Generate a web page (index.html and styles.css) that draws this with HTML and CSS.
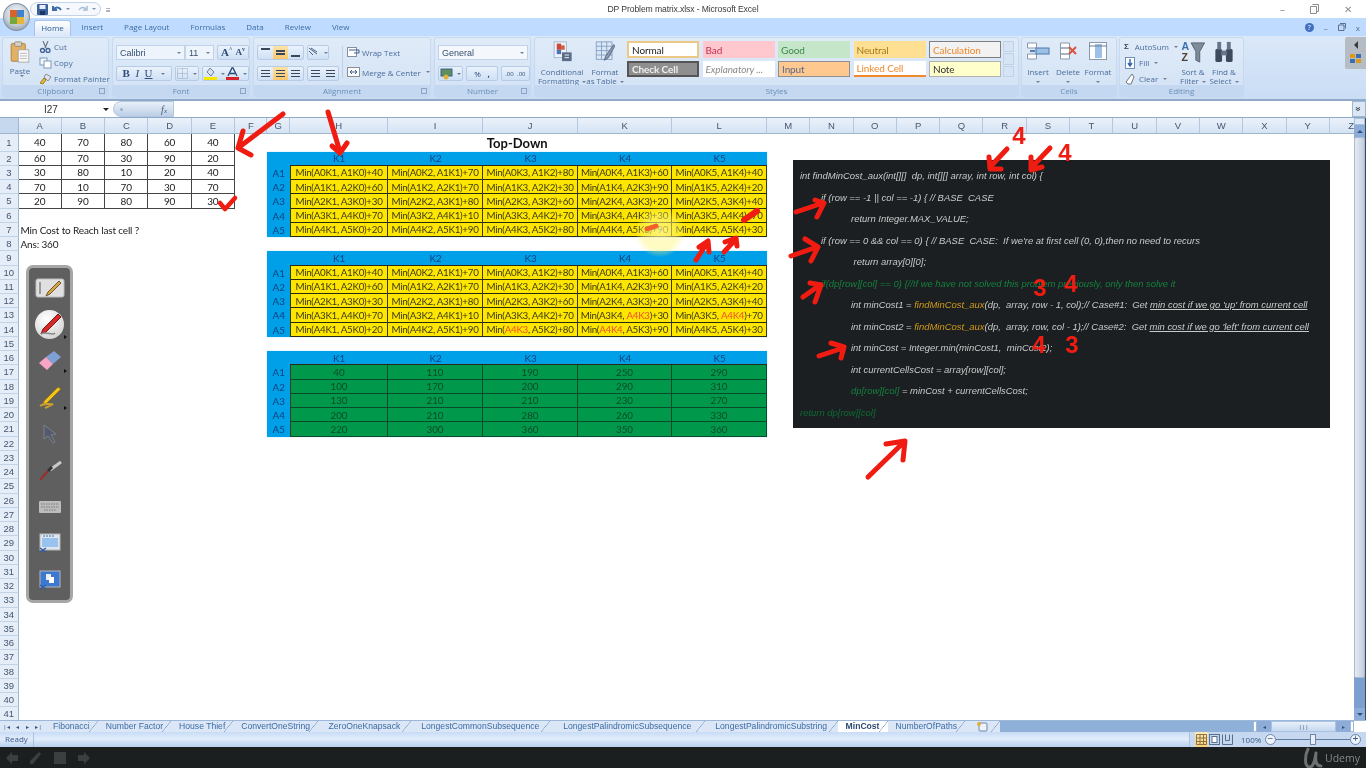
FILE: index.html
```html
<!DOCTYPE html>
<html lang="en">

<head>
  <meta charset="UTF-8">
  <title>DP Problem matrix.xlsx - Microsoft Excel</title>
  <link rel="stylesheet" href="styles.css">
</head>

<body>
  <div class="app">

    <!-- title bar -->
    <div class="titleBar">
      <div class="qat">
        <svg width="11" height="11" viewBox="0 0 11 11"><rect width="11" height="11" rx="1" fill="#3a5f9f"/><rect x="2.500" y="1" width="6" height="4" fill="#e6eef8"/><rect x="3" y="7" width="5" height="4" fill="#20365f"/></svg>
        <svg width="12" height="11" viewBox="0 0 12 11"><path d="M2 2v4h4M2.500 6C4 3 8 2.500 10 6" fill="none" stroke="#3f6cab" stroke-width="2"/></svg>
        <span class="qatCaret"></span>
        <svg width="12" height="11" viewBox="0 0 12 11"><path d="M10 2v4H6M9.500 6C8 3 4 2.500 2 6" fill="none" stroke="#a9bdd6" stroke-width="1.500"/></svg>
        <span class="qatCaret"></span>
      </div>
      <div class="qatMore">&#8801;</div>
      <div class="docTitle">DP Problem matrix.xlsx - Microsoft Excel</div>
      <div class="winBtns">
        <span>&#8211;</span>
        <svg width="9" height="10" viewBox="0 0 9 10"><path d="M2.500 .5h6v7h-2M.5 2.500h6v7h-6z" fill="none" stroke="#8d8d8d"/></svg>
        <span>&#10005;</span>
      </div>
    </div>

    <!-- office button -->
    <div class="officeBtn">
      <div class="officeLogo"><i class="oRed"></i><i class="oBlue"></i><i class="oGreen"></i><i class="oYellow"></i></div>
    </div>

    <!-- tabs -->
    <div class="tabRow">
      <div class="tab tabActive">Home</div>
      <div class="tab">Insert</div>
      <div class="tab">Page Layout</div>
      <div class="tab">Formulas</div>
      <div class="tab">Data</div>
      <div class="tab">Review</div>
      <div class="tab">View</div>
      <div class="tabRight">
        <span class="helpIcon">?</span>
        <span>&#8211;</span>
        <svg width="8" height="8" viewBox="0 0 8 8"><path d="M2 .5h5.500v5M.5 2h5.500v5.500h-5.500z" fill="none" stroke="#5a6f8c"/></svg>
        <span>x</span>
      </div>
    </div>

    <!-- ribbon -->
    <div class="ribbon">

      <div class="group groupClipboard">
        <div class="groupBody clipBody">
          <div class="bigBtn pasteBtn">
            <svg width="20" height="22" viewBox="0 0 22 25"><rect x="1" y="3" width="16" height="20" rx="1" fill="#e3b163" stroke="#a87a35"/><rect x="5" y="1" width="8" height="5" rx="1" fill="#d7d2c4" stroke="#8f8a7a"/><rect x="9" y="10" width="12" height="14" fill="#f8f8f8" stroke="#a6a6a6"/><path d="M11 14h8M11 17h8M11 20h8" stroke="#b5b5b5"/></svg>
            <span>Paste</span>
            <span class="caret"></span>
          </div>
          <div class="clipList">
            <div class="clipItem">
              <svg width="13" height="12" viewBox="0 0 13 12"><path d="M4 0l3 7M9 0L6 7" stroke="#6e7781" stroke-width="1.200"/><circle cx="3.500" cy="9.500" r="2" fill="none" stroke="#3c5f92" stroke-width="1.300"/><circle cx="9" cy="9.500" r="2" fill="none" stroke="#3c5f92" stroke-width="1.300"/></svg>
              Cut
            </div>
            <div class="clipItem">
              <svg width="13" height="12" viewBox="0 0 13 12"><rect x="1" y="1" width="7" height="7" fill="#f5f8fc" stroke="#7d97b8"/><rect x="5" y="4" width="7" height="7" fill="#fff" stroke="#7d97b8"/></svg>
              Copy
            </div>
            <div class="clipItem">
              <svg width="13" height="12" viewBox="0 0 13 12"><path d="M7 1l5 3-3 4-4-4z" fill="#dfe4ea" stroke="#8a8f96"/><path d="M5 5L1 10l3 1 3-4z" fill="#e7b649" stroke="#a47d22"/></svg>
              Format Painter
            </div>
          </div>
        </div>
        <div class="groupLabel">Clipboard<i class="launcher"></i></div>
      </div>

      <div class="group groupFont">
        <div class="groupBody stackBody">
          <div class="ctrlRow">
            <div class="combo comboFont">Calibri<span class="caret"></span></div>
            <div class="combo comboSize">11<span class="caret"></span></div>
            <div class="btnGroup growBtns"><b class="serif">A<sup>^</sup></b><b class="serif small">A<sup>v</sup></b></div>
          </div>
          <div class="ctrlRow">
            <div class="btnGroup fontStyles"><b class="serif">B</b><i class="serif">I</i><u class="serif">U</u><span class="caret"></span></div>
            <div class="btnGroup borderBtn">
              <svg width="11" height="11" viewBox="0 0 11 11"><path d="M.5.5h10v10H.5zM5.500.5v10M.5 5.500h10" fill="none" stroke="#8fa6c2" stroke-dasharray="1 1"/></svg>
              <span class="caret"></span>
            </div>
            <div class="btnGroup colorBtns">
              <svg width="13" height="13" viewBox="0 0 13 13"><path d="M6 1l4 4-3 4-4-4z" fill="#d8e3f0" stroke="#6d7f96"/><rect y="10" width="13" height="3" fill="#f5e500"/></svg>
              <span class="caret"></span>
              <svg width="13" height="13" viewBox="0 0 13 13"><path d="M2 9l4-8h1l4 8M4 6.500h5" fill="none" stroke="#27457a" stroke-width="1.300"/><rect y="10" width="13" height="3" fill="#d9232a"/></svg>
              <span class="caret"></span>
            </div>
          </div>
        </div>
        <div class="groupLabel">Font<i class="launcher"></i></div>
      </div>

      <div class="group groupAlign">
        <div class="groupBody alignBody">
          <div class="stackBody alignBtns">
            <div class="ctrlRow">
              <div class="btnGroup alignTrio">
                <span class="alignCell"><i class="lines top"></i></span>
                <span class="alignCell on"><i class="lines"></i></span>
                <span class="alignCell"><i class="lines bottom"></i></span>
              </div>
              <div class="btnGroup orientBtn"><svg width="13" height="11" viewBox="0 0 13 11"><path d="M1 1l8 6M3 1l6 4M1 4l4 4" stroke="#4a5f7e" fill="none"/></svg><span class="caret"></span></div>
            </div>
            <div class="ctrlRow">
              <div class="btnGroup alignTrio">
                <span class="alignCell"><i class="lines wide"></i></span>
                <span class="alignCell on"><i class="lines wide"></i></span>
                <span class="alignCell"><i class="lines wide"></i></span>
              </div>
              <div class="btnGroup indentBtns">
                <span class="alignCell"><i class="lines wide"></i></span>
                <span class="alignCell"><i class="lines wide"></i></span>
              </div>
            </div>
          </div>
          <div class="wrapCol">
            <div class="clipItem">
              <svg width="13" height="12" viewBox="0 0 13 12"><rect x=".5" y="1.500" width="9" height="9" fill="#fff" stroke="#8a8f96"/><path d="M2 4h10v3H7" fill="none" stroke="#3c5f92"/></svg>
              Wrap Text
            </div>
            <div class="clipItem">
              <svg width="13" height="12" viewBox="0 0 13 12"><rect x=".5" y="1.500" width="12" height="9" fill="#fff" stroke="#8a8f96"/><path d="M3 6h7M3 6l2-2M3 6l2 2M10 6L8 4M10 6L8 8" fill="none" stroke="#3c5f92"/></svg>
              Merge &amp; Center<span class="caret"></span>
            </div>
          </div>
        </div>
        <div class="groupLabel">Alignment<i class="launcher"></i></div>
      </div>

      <div class="group groupNumber">
        <div class="groupBody stackBody">
          <div class="ctrlRow">
            <div class="combo comboNumber">General<span class="caret"></span></div>
          </div>
          <div class="ctrlRow">
            <div class="btnGroup acctBtn">
              <svg width="13" height="12" viewBox="0 0 13 12"><rect x="1" y="1" width="11" height="7" fill="#5f8f5a" stroke="#3c5f92"/><circle cx="6" cy="9" r="2.500" fill="#e1b33e"/></svg>
              <span class="caret"></span>
            </div>
            <div class="btnGroup pctBtn"><span>%</span><b>,</b></div>
            <div class="btnGroup decBtn"><span>.00</span><span>.00</span></div>
          </div>
        </div>
        <div class="groupLabel">Number<i class="launcher"></i></div>
      </div>

      <div class="group groupStyles">
        <div class="groupBody stylesBody">
          <div class="bigBtn condBtn">
            <svg width="24" height="24" viewBox="0 0 24 24"><rect x="3" y="1" width="14" height="18" fill="#eef3f9" stroke="#9fb4cd"/><rect x="6" y="3" width="5" height="7" fill="#c84a3a"/><rect x="6" y="10" width="5" height="5" fill="#4a74b4"/><rect x="11" y="5" width="4" height="5" fill="#d2583f"/><rect x="12" y="13" width="11" height="10" fill="#5b6d86"/><path d="M15 16h5M15 19h5" stroke="#fff"/></svg>
            <span>Conditional</span>
            <span>Formatting<i class="caret"></i></span>
          </div>
          <div class="bigBtn tableBtn">
            <svg width="24" height="24" viewBox="0 0 24 24"><rect x="2" y="1" width="18" height="20" fill="#dbe7f5" stroke="#7f9dc2"/><path d="M2 6h18M2 11h18M2 16h18M8 1v20M14 1v20" stroke="#7f9dc2"/><path d="M22 4L13 17l-2 5 5-3L23 6z" fill="#8a9bb0" stroke="#54657c"/></svg>
            <span>Format</span>
            <span>as Table<i class="caret"></i></span>
          </div>
          <div class="gallery">
            <div class="style styleNormal">Normal</div>
            <div class="style styleBad">Bad</div>
            <div class="style styleGood">Good</div>
            <div class="style styleNeutral">Neutral</div>
            <div class="style styleCalc">Calculation</div>
            <div class="style styleCheck">Check Cell</div>
            <div class="style styleExpl">Explanatory ...</div>
            <div class="style styleInput">Input</div>
            <div class="style styleLinked">Linked Cell</div>
            <div class="style styleNote">Note</div>
          </div>
          <div class="galleryScroll"><i></i><i></i><i></i></div>
        </div>
        <div class="groupLabel">Styles</div>
      </div>

      <div class="group groupCells">
        <div class="groupBody cellsBody">
          <div class="bigBtn cellBtn">
            <svg width="24" height="20" viewBox="0 0 24 20"><path d="M1.500 2h9v5h-9zM1.500 13h9v5h-9z" fill="#fff" stroke="#8a99ab"/><rect x="10" y="7" width="13" height="6" fill="#9cc0e6" stroke="#4a78b0"/><path d="M4 10h5" stroke="#2c5a96" stroke-width="1.500"/></svg>
            <span>Insert</span><span class="caret"></span>
          </div>
          <div class="bigBtn cellBtn">
            <svg width="24" height="20" viewBox="0 0 24 20"><path d="M4.500 2h9v5h-9zM4.500 13h9v5h-9zM4.500 7h9v6h-9z" fill="#fff" stroke="#8a99ab"/><path d="M13 6l7 7M20 6l-7 7" stroke="#d9533f" stroke-width="2"/></svg>
            <span>Delete</span><span class="caret"></span>
          </div>
          <div class="bigBtn cellBtn">
            <svg width="24" height="20" viewBox="0 0 24 20"><rect x="3.500" y="1.500" width="17" height="17" fill="#fff" stroke="#8a99ab"/><rect x="9" y="3" width="7" height="14" fill="#9cc0e6"/><path d="M3 5h18" stroke="#6a7f99"/></svg>
            <span>Format</span><span class="caret"></span>
          </div>
        </div>
        <div class="groupLabel">Cells</div>
      </div>

      <div class="group groupEditing">
        <div class="groupBody editBody">
          <div class="editList">
            <div class="clipItem"><b class="sigma">&#931;</b>AutoSum<span class="caret"></span></div>
            <div class="clipItem">
              <svg width="10" height="12" viewBox="0 0 10 12"><rect x=".5" y=".5" width="9" height="11" fill="#fff" stroke="#6f8fb8"/><path d="M5 2v6M3 6l2 3 2-3" fill="none" stroke="#2c63ad" stroke-width="1.400"/></svg>
              Fill<span class="caret"></span>
            </div>
            <div class="clipItem">
              <svg width="10" height="12" viewBox="0 0 10 12"><path d="M7 1L1 9l2 2h3l3-7z" fill="#fff" stroke="#6e7781"/></svg>
              Clear<span class="caret"></span>
            </div>
          </div>
          <div class="bigBtn sortBtn">
            <svg width="26" height="25" viewBox="0 0 26 25"><text x="1" y="10" class="azText">A</text><text x="1" y="22" class="azText zText">Z</text><path d="M11 3h14l-5 9v11l-4-2v-9z" fill="#7e8b9b" stroke="#55616f"/></svg>
            <span>Sort &amp;</span>
            <span>Filter<i class="caret"></i></span>
          </div>
          <div class="bigBtn findBtn">
            <svg width="22" height="25" viewBox="0 0 22 25"><rect x="2" y="9" width="7" height="14" rx="2" fill="#3d4a5c"/><rect x="13" y="9" width="7" height="14" rx="2" fill="#3d4a5c"/><rect x="4" y="2" width="4" height="8" fill="#65748a"/><rect x="14" y="2" width="4" height="8" fill="#65748a"/><rect x="8" y="11" width="6" height="5" fill="#65748a"/></svg>
            <span>Find &amp;</span>
            <span>Select<i class="caret"></i></span>
          </div>
        </div>
        <div class="groupLabel">Editing</div>
      </div>

      <div class="sideWidget">
        <span class="sideArrow"></span>
        <div class="sideDots"><i class="dotGold"></i><i class="dotBlue"></i><i class="dotBlue"></i><i class="dotGold"></i></div>
      </div>
    </div>

    <!-- formula bar -->
    <div class="formulaBar">
      <div class="nameBox">I27<span class="caretDark"></span></div>
      <div class="fxBtn"><span class="fxDot"></span><em>f<small>x</small></em></div>
      <div class="formulaInput"></div>
      <div class="formulaMore"><span>&#187;</span></div>
    </div>

    <!-- sheet -->
    <div class="sheetWrap">
      <div class="sheet">
        <div class="corner"></div>
        <div class="colHd">A</div><div class="colHd">B</div><div class="colHd">C</div><div class="colHd">D</div><div class="colHd">E</div>
        <div class="colHd">F</div><div class="colHd">G</div><div class="colHd">H</div><div class="colHd">I</div><div class="colHd">J</div>
        <div class="colHd">K</div><div class="colHd">L</div><div class="colHd">M</div><div class="colHd">N</div><div class="colHd">O</div>
        <div class="colHd">P</div><div class="colHd">Q</div><div class="colHd">R</div><div class="colHd">S</div><div class="colHd">T</div>
        <div class="colHd">U</div><div class="colHd">V</div><div class="colHd">W</div><div class="colHd">X</div><div class="colHd">Y</div>
        <div class="colHd">Z</div>

        <div class="rowHd">1</div><div class="rowHd">2</div><div class="rowHd">3</div><div class="rowHd">4</div><div class="rowHd">5</div>
        <div class="rowHd">6</div><div class="rowHd">7</div><div class="rowHd">8</div><div class="rowHd">9</div><div class="rowHd">10</div>
        <div class="rowHd">11</div><div class="rowHd">12</div><div class="rowHd">13</div><div class="rowHd">14</div><div class="rowHd">15</div>
        <div class="rowHd">16</div><div class="rowHd">17</div><div class="rowHd">18</div><div class="rowHd">19</div><div class="rowHd">20</div>
        <div class="rowHd">21</div><div class="rowHd">22</div><div class="rowHd">23</div><div class="rowHd">24</div><div class="rowHd">25</div>
        <div class="rowHd">26</div><div class="rowHd">27</div><div class="rowHd">28</div><div class="rowHd">29</div><div class="rowHd">30</div>
        <div class="rowHd">31</div><div class="rowHd">32</div><div class="rowHd">33</div><div class="rowHd">34</div><div class="rowHd">35</div>
        <div class="rowHd">36</div><div class="rowHd">37</div><div class="rowHd">38</div><div class="rowHd">39</div><div class="rowHd">40</div>
        <div class="rowHd">41</div>

        <div class="costGrid">
          <div>40</div><div>70</div><div>80</div><div>60</div><div>40</div>
          <div>60</div><div>70</div><div>30</div><div>90</div><div>20</div>
          <div>30</div><div>80</div><div>10</div><div>20</div><div>40</div>
          <div>70</div><div>10</div><div>70</div><div>30</div><div>70</div>
          <div>20</div><div>90</div><div>80</div><div>90</div><div>30</div>
        </div>
        <div class="question">Min Cost to Reach last cell ?</div>
        <div class="answer">Ans: 360</div>

        <div class="blockTitle">Top-Down</div>

        <div class="dpTable tableOne">
          <div class="blank"></div><div class="kHd">K1</div><div class="kHd">K2</div><div class="kHd">K3</div><div class="kHd">K4</div><div class="kHd">K5</div>
          <div class="aHd">A1</div><div class="cell">Min(A0K1, A1K0)+40</div><div class="cell">Min(A0K2, A1K1)+70</div><div class="cell">Min(A0K3, A1K2)+80</div><div class="cell">Min(A0K4, A1K3)+60</div><div class="cell">Min(A0K5, A1K4)+40</div>
          <div class="aHd">A2</div><div class="cell">Min(A1K1, A2K0)+60</div><div class="cell">Min(A1K2, A2K1)+70</div><div class="cell">Min(A1K3, A2K2)+30</div><div class="cell">Min(A1K4, A2K3)+90</div><div class="cell">Min(A1K5, A2K4)+20</div>
          <div class="aHd">A3</div><div class="cell">Min(A2K1, A3K0)+30</div><div class="cell">Min(A2K2, A3K1)+80</div><div class="cell">Min(A2K3, A3K2)+60</div><div class="cell">Min(A2K4, A3K3)+20</div><div class="cell">Min(A2K5, A3K4)+40</div>
          <div class="aHd">A4</div><div class="cell">Min(A3K1, A4K0)+70</div><div class="cell">Min(A3K2, A4K1)+10</div><div class="cell">Min(A3K3, A4K2)+70</div><div class="cell">Min(A3K4, A4K3)+30</div><div class="cell">Min(A3K5, A4K4)+70</div>
          <div class="aHd">A5</div><div class="cell">Min(A4K1, A5K0)+20</div><div class="cell">Min(A4K2, A5K1)+90</div><div class="cell">Min(A4K3, A5K2)+80</div><div class="cell">Min(A4K4, A5K3)+90</div><div class="cell">Min(A4K5, A5K4)+30</div>
        </div>

        <div class="dpTable tableTwo">
          <div class="blank"></div><div class="kHd">K1</div><div class="kHd">K2</div><div class="kHd">K3</div><div class="kHd">K4</div><div class="kHd">K5</div>
          <div class="aHd">A1</div><div class="cell">Min(A0K1, A1K0)+40</div><div class="cell">Min(A0K2, A1K1)+70</div><div class="cell">Min(A0K3, A1K2)+80</div><div class="cell">Min(A0K4, A1K3)+60</div><div class="cell">Min(A0K5, A1K4)+40</div>
          <div class="aHd">A2</div><div class="cell">Min(A1K1, A2K0)+60</div><div class="cell">Min(A1K2, A2K1)+70</div><div class="cell">Min(A1K3, A2K2)+30</div><div class="cell">Min(A1K4, A2K3)+90</div><div class="cell">Min(A1K5, A2K4)+20</div>
          <div class="aHd">A3</div><div class="cell">Min(A2K1, A3K0)+30</div><div class="cell">Min(A2K2, A3K1)+80</div><div class="cell">Min(A2K3, A3K2)+60</div><div class="cell">Min(A2K4, A3K3)+20</div><div class="cell">Min(A2K5, A3K4)+40</div>
          <div class="aHd">A4</div><div class="cell">Min(A3K1, A4K0)+70</div><div class="cell">Min(A3K2, A4K1)+10</div><div class="cell">Min(A3K3, A4K2)+70</div><div class="cell">Min(A3K4, <span class="hot">A4K3</span>)+30</div><div class="cell">Min(A3K5, <span class="hot">A4K4</span>)+70</div>
          <div class="aHd">A5</div><div class="cell">Min(A4K1, A5K0)+20</div><div class="cell">Min(A4K2, A5K1)+90</div><div class="cell">Min(<span class="hot">A4K3</span>, A5K2)+80</div><div class="cell">Min(<span class="hot">A4K4</span>, A5K3)+90</div><div class="cell">Min(A4K5, A5K4)+30</div>
        </div>

        <div class="dpTable tableThree">
          <div class="blank"></div><div class="kHd">K1</div><div class="kHd">K2</div><div class="kHd">K3</div><div class="kHd">K4</div><div class="kHd">K5</div>
          <div class="aHd">A1</div><div class="cell">40</div><div class="cell">110</div><div class="cell">190</div><div class="cell">250</div><div class="cell">290</div>
          <div class="aHd">A2</div><div class="cell">100</div><div class="cell">170</div><div class="cell">200</div><div class="cell">290</div><div class="cell">310</div>
          <div class="aHd">A3</div><div class="cell">130</div><div class="cell">210</div><div class="cell">210</div><div class="cell">230</div><div class="cell">270</div>
          <div class="aHd">A4</div><div class="cell">200</div><div class="cell">210</div><div class="cell">280</div><div class="cell">260</div><div class="cell">330</div>
          <div class="aHd">A5</div><div class="cell">220</div><div class="cell">300</div><div class="cell">360</div><div class="cell">350</div><div class="cell">360</div>
        </div>
      </div>

      <div class="vScroll">
        <div class="vSplit"></div>
        <div class="vArrow"><i class="arrowUp"></i></div>
        <div class="vThumb"></div>
        <div class="vTrack"></div>
        <div class="vArrow"><i class="arrowDown"></i></div>
      </div>
    </div>

    <!-- sheet tabs -->
    <div class="sheetTabs">
      <div class="tabNav"><span>|&#9666;</span><span>&#9666;</span><span>&#9656;</span><span>&#9656;|</span></div>
      <div class="sheetTab">Fibonacci</div>
      <div class="sheetTab">Number Factor</div>
      <div class="sheetTab">House Thief</div>
      <div class="sheetTab">ConvertOneString</div>
      <div class="sheetTab tabWide">ZeroOneKnapsack</div>
      <div class="sheetTab tabWide">LongestCommonSubsequence</div>
      <div class="sheetTab tabWider">LongestPalindromicSubsequence</div>
      <div class="sheetTab tabWide">LongestPalindromicSubstring</div>
      <div class="sheetTab sheetTabOn">MinCost</div>
      <div class="sheetTab">NumberOfPaths</div>
      <div class="sheetTab newSheet">
        <svg width="13" height="11" viewBox="0 0 13 11"><rect x="3" y="2" width="8" height="8" rx="1" fill="#eef3f9" stroke="#6c86a8"/><circle cx="3" cy="3" r="2" fill="#e3ad3c"/></svg>
      </div>
      <div class="hScroll">
        <div class="hGrip"></div>
        <div class="hArrow">&#9666;</div>
        <div class="hThumb">|||</div>
        <div class="hArrow">&#9656;</div>
        <div class="hGrip"></div>
      </div>
      <div class="tabsEnd"></div>
    </div>

    <!-- status bar -->
    <div class="statusBar">
      <div class="ready">Ready</div>
      <div class="statusRight">
        <div class="viewBtns">
          <span class="viewBtn viewOn"><svg width="11" height="11" viewBox="0 0 11 11"><path d="M.5.5h10v10H.5zM.5 4h10M.5 7.500h10M4 .5v10M7.500.5v10" fill="none" stroke="#8a7540"/></svg></span>
          <span class="viewBtn"><svg width="11" height="11" viewBox="0 0 11 11"><rect x=".5" y=".5" width="10" height="10" fill="none" stroke="#566f8d"/><rect x="3" y="2.500" width="5" height="6" fill="#fff" stroke="#566f8d"/></svg></span>
          <span class="viewBtn"><svg width="11" height="11" viewBox="0 0 11 11"><path d="M.5.5v10h10V.5M3.500.5v6h4v-6" fill="none" stroke="#566f8d"/></svg></span>
        </div>
        <span class="zoomPct">100%</span>
        <span class="zoomBtn">&#8722;</span>
        <div class="zoomTrack"><i class="zoomThumb"></i></div>
        <span class="zoomBtn">+</span>
      </div>
    </div>

    <!-- recorder bar -->
    <div class="playerBar">
      <div class="playerIcons">
        <svg width="14" height="14" viewBox="0 0 14 14"><path d="M7 1L1 7l6 6v-3h6V4H7z" fill="#3c3f40"/></svg>
        <svg width="14" height="14" viewBox="0 0 14 14"><path d="M10 1l2 2-8 10-3 0 0-3z" fill="#3c3f40"/></svg>
        <svg width="14" height="14" viewBox="0 0 14 14"><rect x="1" y="1" width="12" height="12" fill="#3c3f40"/></svg>
        <svg width="14" height="14" viewBox="0 0 14 14"><path d="M7 1l6 6-6 6v-3H1V4h6z" fill="#3c3f40"/></svg>
      </div>
      <div class="udemy">
        <svg width="20" height="22" viewBox="0 0 20 22"><path d="M5 2C2 8 1 19 6 20c5 1 6-9 7-14M13 6c-1 8 0 13 5 13" fill="none" stroke="#6e7071" stroke-width="3" stroke-linecap="round"/></svg>
        <span>Udemy</span>
      </div>
    </div>

    <!-- floating picture of the code -->
    <div class="codePanel">
      <div class="codeLine">int findMinCost_aux(int[][]  dp, int[][] array, int row, int col) {</div>
      <div class="codeLine lvl1">if (row == -1 || col == -1) { // BASE  CASE</div>
      <div class="codeLine lvl2">return Integer.MAX_VALUE;</div>
      <div class="codeLine lvl1">if (row == 0 &amp;&amp; col == 0) { // BASE  CASE:  If we're at first cell (0, 0),then no need to recurs</div>
      <div class="codeLine lvl2"> return array[0][0];</div>
      <div class="codeLine lvl1 green">if(dp[row][col] == 0) {//If we have not solved this problem previously, only then solve it</div>
      <div class="codeLine lvl2">int minCost1 = <span class="fnName">findMinCost_aux</span>(dp,  array, row - 1, col);// Case#1:  Get <u>min cost if we go 'up' from current cell</u></div>
      <div class="codeLine lvl2">int minCost2 = <span class="fnName">findMinCost_aux</span>(dp,  array, row, col - 1);// Case#2:  Get <u>min cost if we go 'left' from current cell</u></div>
      <div class="codeLine lvl2">int minCost = Integer.min(minCost1,  minCost2);</div>
      <div class="codeLine lvl2">int currentCellsCost = array[row][col];</div>
      <div class="codeLine lvl2"><span class="green">dp[row][col]</span> = minCost + currentCellsCost;</div>
      <div class="codeLine green dim">return dp[row][col]</div>
    </div>

    <!-- presentation toolbar -->
    <div class="penBar">
      <svg width="30" height="22" viewBox="0 0 30 22"><rect x="1" y="2" width="28" height="18" rx="2" fill="#e0e0e0" stroke="#bdbdbd"/><path d="M5 5v12" stroke="#999" stroke-width="2"/><path d="M24 4L13 15l-2 4 4-2L26 6z" fill="#d9a441" stroke="#6b5a30"/></svg>
      <div class="penActive">
        <svg width="28" height="28" viewBox="0 0 28 28"><path d="M22 3L7 18l-2 5 5-2L25 6z" fill="#d72b2b" stroke="#7a1515"/><path d="M5 23c4-3 12 2 14-1" fill="none" stroke="#8a8a8a" stroke-width="1.500"/></svg>
        <i class="penFlag"></i>
      </div>
      <div class="penSlot">
        <svg width="24" height="24" viewBox="0 0 24 24"><path d="M8 8l8-6 7 6-8 7z" fill="#7ea0d6"/><path d="M1 14l7-6 7 7-6 6z" fill="#f6a6c4"/></svg>
        <i class="penFlag"></i>
      </div>
      <div class="penSlot">
        <svg width="24" height="24" viewBox="0 0 24 24"><path d="M20 1l3 2L9 17l-4 2 1-4z" fill="#f2c21d" stroke="#8e7316"/><path d="M2 20c5-4 9-1 13-2-3 2-6 3-8 4" fill="none" stroke="#c9a02b" stroke-width="2"/></svg>
        <i class="penFlag"></i>
      </div>
      <svg width="14" height="20" viewBox="0 0 14 20"><path d="M1 1l0 14 4-3 5 7 2-1-4-7 5-1z" fill="#535a6b" stroke="#7a7f8a"/></svg>
      <svg width="24" height="22" viewBox="0 0 24 22"><path d="M23 2L12 10" stroke="#c8c8c8" stroke-width="3"/><path d="M14 7l-4 4" stroke="#333" stroke-width="3"/><path d="M10 11L2 20" stroke="#9a2d2d" stroke-width="2"/></svg>
      <svg width="22" height="12" viewBox="0 0 22 12"><rect width="22" height="12" rx="1" fill="#bdbdbd"/><path d="M2 3h18M2 6h18M5 9h12" stroke="#777" stroke-dasharray="1.500 1"/></svg>
      <svg width="22" height="21" viewBox="0 0 22 21"><rect x="1" y="1" width="20" height="16" fill="#dfe6ee" stroke="#b5b5b5"/><rect x="3" y="5" width="16" height="9" fill="#9ac2ee"/><path d="M4 3h12" stroke="#3e6fb3" stroke-dasharray="2 1"/><path d="M1 15l6 4M7 15l-6 4" stroke="#2f5da8" stroke-width="1.500"/></svg>
      <svg width="22" height="21" viewBox="0 0 22 21"><rect x="1" y="1" width="20" height="16" fill="#3d78d0" stroke="#b5b5b5"/><rect x="7" y="4" width="5" height="6" fill="#e9eef5"/><rect x="10" y="7" width="5" height="6" fill="#fff"/><path d="M1 15l6 4M7 15l-6 4" stroke="#2f5da8" stroke-width="1.500"/></svg>
    </div>

    <!-- cursor highlight and red pen marks drawn over the video -->
    <div class="cursorGlow"></div>
    <svg class="inkLayer" width="1366" height="768" viewBox="0 0 1366 768">
      <g class="ink">
        <path d="M283 114L238 148M243 131L238 148L251 155"/>
        <path d="M328 112L340 152M332 146L340 153L347 143"/>
        <path class="thin" d="M220 203L225 209L235 198"/>
        <path class="inkOrange" d="M647 229L656 226"/>
        <path class="thick" d="M744 220L757 211"/>
        <path d="M696 260L707 243M699 247L708 241L709 252"/>
        <path d="M724 252L735 240M725 242L736 238L737 246"/>
        <path d="M1007 149L990 167M989 157L990 169L1001 169"/>
        <path d="M1050 148L1031 168M1031 157L1031 170L1042 167"/>
        <path d="M796 212L823 203M815 200L824 203L817 217"/>
        <path d="M791 256L817 247M805 239L818 247L811 261"/>
        <path d="M803 297L820 285M810 283L821 285L815 302"/>
        <path d="M819 356L843 348M831 343L844 347L841 358"/>
        <path d="M868 477L904 442M886 444L905 441L903 460"/>
      </g>
    </svg>
    <span class="inkDigit d1">4</span>
    <span class="inkDigit d2">4</span>
    <span class="inkDigit d3">3</span>
    <span class="inkDigit d4">4</span>
    <span class="inkDigit d5">4</span>
    <span class="inkDigit d6">3</span>

  </div>
</body>

</html>
```

FILE: styles.css
```css
* {
  box-sizing: border-box;
}

html,
body {
  margin: 0;
  height: 100%;
  overflow: hidden;
}

.app {
  position: relative;
  width: 1366px;
  height: 768px;
  overflow: hidden;
  background: #fff;
  display: flex;
  flex-direction: column;
  font-family: "Open Sans", "Noto Sans", sans-serif;
  font-size: 8px;
  color: #4a6d9c;
  filter: blur(0.35px);
}

.caret {
  display: inline-block;
  width: 0;
  height: 0;
  margin-left: 3px;
  border-left: 2px solid transparent;
  border-right: 2px solid transparent;
  border-top: 2px solid #6b7f99;
  vertical-align: middle;
}

/* title bar */
.titleBar {
  height: 18px;
  flex: none;
  display: flex;
  align-items: center;
  position: relative;
  background: #fff;
}

.qat {
  margin-left: 30px;
  width: 71px;
  height: 14px;
  border: 1px solid #c4d3e6;
  border-radius: 7px;
  background: #f5f8fd;
  display: flex;
  align-items: center;
  gap: 3px;
  padding-left: 6px;
}

.qatCaret {
  width: 0;
  height: 0;
  margin-right: 4px;
  border-left: 2px solid transparent;
  border-right: 2px solid transparent;
  border-top: 2px solid #7d8fa8;
}

.qatMore {
  margin-left: 5px;
  color: #667;
  font-size: 8px;
}

.docTitle {
  position: absolute;
  left: 0;
  right: 0;
  text-align: center;
  font-family: "Liberation Sans", sans-serif;
  font-size: 8.600px;
  letter-spacing: -0.1px;
  color: #3a3a3a;
}

.winBtns {
  margin-left: auto;
  display: flex;
  align-items: center;
  gap: 25px;
  padding-right: 14px;
  color: #8d8d8d;
  font-size: 10px;
}

/* office button */
.officeBtn {
  position: absolute;
  left: 3px;
  top: 3px;
  width: 27px;
  height: 28px;
  border-radius: 50%;
  background: radial-gradient(circle at 50% 35%, #f6f8fb 0, #c4cdd6 55%, #7d8a93 100%);
  border: 1px solid #7f92a8;
  display: flex;
  align-items: center;
  justify-content: center;
  z-index: 2;
}

.officeLogo {
  display: grid;
  grid-template-columns: 7px 7px;
  grid-template-rows: 7px 7px;
}

.oRed { background: #d9622b; }
.oBlue { background: #3f83cc; }
.oGreen { background: #74a83e; }
.oYellow { background: #e6b63a; }

/* ribbon tabs */
.tabRow {
  height: 18px;
  flex: none;
  display: flex;
  align-items: flex-end;
  padding-left: 34px;
  background: #bfdbff;
  color: #3f6da3;
}

.tab {
  height: 16px;
  padding: 0 10.500px;
  line-height: 14px;
  white-space: nowrap;
}

.tabActive {
  width: 37px;
  padding: 0;
  text-align: center;
  background: linear-gradient(#fdfeff, #dbe8f8);
  border: 1px solid #a9c4e4;
  border-bottom: 0;
  border-radius: 3px 3px 0 0;
  color: #2f5a94;
}

.tabRight {
  margin-left: auto;
  height: 18px;
  display: flex;
  align-items: center;
  gap: 10px;
  padding-right: 6px;
  color: #5a6f8c;
}

.helpIcon {
  width: 9px;
  height: 9px;
  border-radius: 50%;
  background: #3f6fc0;
  color: #fff;
  font-size: 7px;
  line-height: 9px;
  text-align: center;
}

/* ribbon */
.ribbon {
  height: 65px;
  flex: none;
  display: flex;
  gap: 3px;
  padding: 1px 0 1px 2px;
  background: linear-gradient(#dbe8f9, #c9ddf5);
  border-bottom: 2px solid #8fabc9;
}

.group {
  display: flex;
  flex-direction: column;
  background: linear-gradient(#e0ebf8, #d2e2f5);
  border: 1px solid #c7d9ee;
  border-radius: 3px;
  flex: none;
}

.groupClipboard { width: 107px; }
.groupFont { width: 138px; }
.groupAlign { width: 178px; }
.groupNumber { width: 97px; }
.groupStyles { width: 485px; }
.groupCells { width: 96px; margin-left: -1px; }
.groupEditing { width: 125px; margin-left: -1px; }

.groupBody {
  flex: 1;
  min-height: 0;
}

.groupLabel {
  height: 12px;
  flex: none;
  position: relative;
  text-align: center;
  line-height: 11px;
  color: #6a8cb5;
  background: #c4d9f1;
  border-radius: 0 0 3px 3px;
}

.launcher {
  position: absolute;
  right: 3px;
  top: 3px;
  width: 6px;
  height: 6px;
  border: 1px solid #8ca5c4;
}

.bigBtn {
  display: flex;
  flex-direction: column;
  align-items: center;
  line-height: 9px;
  flex: none;
  white-space: nowrap;
}

.bigBtn svg {
  margin-bottom: 1px;
}

.clipBody {
  display: flex;
  padding: 3px 0 0 4px;
}

.pasteBtn {
  width: 26px;
}

.pasteBtn svg {
  margin-bottom: 3px;
}

.clipList {
  display: flex;
  flex-direction: column;
  gap: 3px;
  margin: -1px 0 0 6px;
}

.clipItem {
  display: flex;
  align-items: center;
  gap: 2px;
  height: 13px;
  white-space: nowrap;
}

.stackBody {
  display: flex;
  flex-direction: column;
  gap: 6px;
  padding: 7px 0 0 3px;
}

.ctrlRow {
  display: flex;
  gap: 3px;
  height: 15px;
}

.combo {
  height: 15px;
  display: flex;
  align-items: center;
  padding: 0 3px;
  background: #eef4fc;
  border: 1px solid #c0d3ea;
  color: #35506f;
  font-family: "Liberation Sans", sans-serif;
  font-size: 9px;
}

.combo .caret {
  margin-left: auto;
}

.comboFont { width: 69px; margin-right: -3px; }
.comboSize { width: 29px; }
.comboNumber { width: 90px; background: #f4f8fd; }

.btnGroup {
  height: 15px;
  display: flex;
  align-items: center;
  justify-content: space-evenly;
  background: linear-gradient(#eaf2fc, #cfe0f5);
  border: 1px solid #b5cbe6;
  border-radius: 2px;
  color: #2e4d78;
}

.serif {
  font-family: "Liberation Serif", serif;
  font-size: 11px;
  line-height: 11px;
}

.serif.small {
  font-size: 9px;
}

.serif sup {
  font-size: 6px;
  line-height: 0;
}

.growBtns { width: 32px; }
.fontStyles { width: 56px; }
.borderBtn { width: 25px; }
.colorBtns { width: 47px; }

.alignBody {
  display: flex;
}

.alignBtns {
  width: 86px;
}

.alignTrio { width: 47px; padding: 0; justify-content: flex-start; }
.indentBtns { width: 32px; padding: 0; justify-content: flex-start; }
.orientBtn { width: 22px; }

.alignCell {
  flex: 1;
  height: 13px;
  display: flex;
  align-items: center;
  justify-content: center;
}

.alignCell.on {
  background: linear-gradient(#fde3a8, #fbc66b);
}

.lines {
  display: block;
  width: 9px;
  height: 5px;
  border-top: 2px solid #39475b;
  border-bottom: 2px solid #39475b;
}

.lines.top { height: 3px; border-bottom: 0; margin-bottom: 6px; }
.lines.bottom { height: 3px; border-top: 0; margin-top: 6px; }

.lines.wide {
  height: 7px;
  border-width: 1px 0;
  background: linear-gradient(#39475b, #39475b) center / 100% 1px no-repeat;
}

.wrapCol {
  display: flex;
  flex-direction: column;
  gap: 8px;
  margin: 8px 0 0 2px;
  padding-left: 4px;
  border-left: 1px solid #bcd0e8;
  height: 32px;
}

.acctBtn { width: 26px; }
.pctBtn { width: 32px; }
.decBtn { width: 30px; font-size: 6px; }

.stylesBody {
  display: flex;
  padding: 3px 0 0 2px;
}

.condBtn { width: 50px; }
.tableBtn { width: 36px; }

.condBtn svg,
.tableBtn svg {
  margin-bottom: 5px;
}

.caret + .caret {
  margin-left: 0;
}

.gallery {
  margin-left: 4px;
  display: grid;
  grid-template-columns: repeat(5, 72px);
  grid-template-rows: 17px 16px;
  column-gap: 3.500px;
  row-gap: 3px;
  font-family: Lato, sans-serif;
  font-size: 10px;
  letter-spacing: -0.1px;
}

.style {
  display: flex;
  align-items: center;
  padding-left: 3px;
  white-space: nowrap;
  overflow: hidden;
}

.styleNormal { background: #fff; border: 2px solid #edc987; color: #222; }
.styleBad { background: #ffc7ce; color: #c4304a; }
.styleGood { background: #c6e6c9; color: #3d8a4a; }
.styleNeutral { background: #ffe093; color: #a37a16; }
.styleCalc { background: #f2f2f2; color: #ef8a2c; border: 1px solid #7f7f7f; }
.styleCheck { background: #8f8f8f; color: #eee; border: 2px solid #555; font-weight: bold; }
.styleExpl { background: #fff; color: #8a8a8a; font-style: italic; }
.styleInput { background: #ffc88f; color: #556a8f; border: 1px solid #8f8f8f; }
.styleLinked { background: #fff; color: #f08a2c; border-bottom: 2px solid #f08a2c; }
.styleNote { background: #ffffcc; color: #333; border: 1px solid #b2b2b2; }

.galleryScroll {
  width: 11px;
  height: 36px;
  margin-left: 2px;
  display: flex;
  flex-direction: column;
  gap: 1px;
}

.galleryScroll i {
  flex: 1;
  background: #d6e4f5;
  border: 1px solid #bfd2ea;
}

.cellsBody {
  display: flex;
  padding: 3px 0 0 1px;
}

.cellBtn {
  width: 30px;
}

.cellBtn svg {
  margin-bottom: 6px;
}

.cellBtn .caret {
  margin: 5px 0 0;
}

.editBody {
  display: flex;
  padding: 2px 0 0 4px;
}

.editList {
  width: 54px;
  display: flex;
  flex-direction: column;
  gap: 3px;
}

.sigma {
  width: 12px;
  font-family: "Liberation Sans", sans-serif;
  color: #33425a;
}

.editList svg {
  margin: 0 2px 0 1px;
}

.sortBtn { width: 30px; }
.findBtn { width: 32px; }

.sortBtn svg,
.findBtn svg {
  margin-bottom: 3px;
}

.azText {
  font-family: "Liberation Sans", sans-serif;
  font-weight: bold;
  font-size: 11px;
  fill: #3b6fb5;
}

.zText {
  fill: #53402c;
}

.sideWidget {
  margin-left: auto;
  width: 21px;
  height: 32px;
  background: #b6bcc4;
  border-radius: 2px 0 0 2px;
  display: flex;
  flex-direction: column;
  align-items: center;
  gap: 5px;
  padding-top: 4px;
}

.sideArrow {
  width: 0;
  height: 0;
  border-top: 4px solid transparent;
  border-bottom: 4px solid transparent;
  border-right: 4px solid #3a3a3a;
}

.sideDots {
  display: grid;
  grid-template-columns: 5px 5px;
  gap: 1px;
}

.sideDots i {
  height: 4px;
}

.dotGold { background: #d99a1e; }
.dotBlue { background: #3c6fb0; }

/* formula bar */
.formulaBar {
  height: 17px;
  flex: none;
  display: flex;
  background: #fff;
  border-bottom: 1px solid #8fabc9;
}

.nameBox {
  width: 113px;
  display: flex;
  align-items: center;
  padding: 0 4px 0 44px;
  color: #333;
  font-family: "Liberation Sans", sans-serif;
  font-size: 10px;
}

.caretDark {
  margin-left: auto;
  width: 0;
  height: 0;
  border-left: 3px solid transparent;
  border-right: 3px solid transparent;
  border-top: 3px solid #222;
}

.fxBtn {
  width: 61px;
  display: flex;
  align-items: center;
  justify-content: space-between;
  padding: 0 6px;
  background: linear-gradient(#e9f0f9, #bccfe6);
  border: 1px solid #b4c7de;
  border-radius: 8px 0 0 8px;
  font-family: "Liberation Serif", serif;
  font-size: 10px;
  color: #4a5c74;
}

.fxBtn small {
  font-size: 7px;
}

.fxDot {
  width: 3px;
  height: 3px;
  border-radius: 50%;
  background: #9bb0c9;
}

.formulaInput {
  flex: 1;
}

.formulaMore {
  width: 14px;
  display: flex;
  align-items: center;
  justify-content: center;
  font-size: 10px;
  color: #333;
  background: #dbe7f5;
  border: 1px solid #9fb6d0;
}

.formulaMore span {
  transform: rotate(90deg);
}

/* sheet */
.sheetWrap {
  height: 602px;
  flex: none;
  display: flex;
}

.sheet {
  width: 1354px;
  overflow: hidden;
  display: grid;
  grid-template-columns: 18.500px repeat(5, 43.300px) 32.500px 22.500px 98px 95px 95px 94px 95px repeat(14, 43.300px);
  grid-template-rows: 15.500px 18px repeat(40, 14.250px);
  font-family: Lato, "Liberation Sans", sans-serif;
  font-size: 10px;
  letter-spacing: -0.15px;
  color: #222;
}

.corner {
  background: #c5d8ee;
  border-right: 1px solid #9eb6ce;
  border-bottom: 1px solid #9eb6ce;
}

.colHd {
  background: linear-gradient(#eaf1fa, #d5e3f4);
  border-right: 1px solid #b3c7de;
  border-bottom: 1px solid #9eb6ce;
  text-align: center;
  line-height: 15px;
  color: #45566e;
  font-family: "Liberation Sans", sans-serif;
  font-size: 9.500px;
}

.rowHd {
  grid-column: 1;
  background: #e4edf8;
  border-right: 1px solid #9eb6ce;
  border-bottom: 1px solid #c3d3e6;
  display: flex;
  align-items: center;
  justify-content: center;
  color: #45566e;
  font-family: "Liberation Sans", sans-serif;
  font-size: 9.500px;
}

.costGrid {
  grid-column: 2 / 7;
  grid-row: 2 / 7;
  display: grid;
  grid-template-columns: subgrid;
  grid-template-rows: subgrid;
}

.costGrid div {
  display: flex;
  align-items: center;
  justify-content: center;
  border-right: 1px solid #444;
  border-bottom: 1px solid #444;
}

.question {
  grid-column: 2 / 8;
  grid-row: 8;
  padding-left: 2px;
  line-height: 14px;
  white-space: nowrap;
}

.answer {
  grid-column: 2 / 8;
  grid-row: 9;
  padding-left: 2px;
  line-height: 14px;
}

.blockTitle {
  grid-column: 8 / 14;
  grid-row: 2;
  align-self: center;
  text-align: center;
  font-weight: bold;
  font-size: 13px;
  line-height: 16px;
  letter-spacing: 0;
  color: #111;
}

.dpTable {
  grid-column: 8 / 14;
  display: grid;
  grid-template-columns: subgrid;
  grid-template-rows: subgrid;
  background: #00a0e9;
  box-shadow: 0 0 1px #7fd0f5;
  letter-spacing: -0.3px;
  font-size: 9.800px;
}

.tableOne { grid-row: 3 / 9; }
.tableTwo { grid-row: 10 / 16; }
.tableThree { grid-row: 17 / 23; }

.kHd,
.aHd {
  display: flex;
  align-items: center;
  justify-content: center;
  color: #0d3f7c;
  letter-spacing: 0;
}

.cell {
  display: flex;
  align-items: center;
  justify-content: center;
  white-space: pre;
  background: #ffe600;
  color: #3a3a12;
  border-right: 1px solid #3a3a1a;
  border-bottom: 1px solid #2a2a14;
}

.dpTable .aHd + .cell {
  border-left: 1px solid #3a3a1a;
}

.dpTable > .kHd {
  border-bottom: 1px solid #2a2a14;
}

.tableThree .cell {
  background: #00984a;
  color: #0b4a28;
  border-color: #0d4a2a;
  letter-spacing: 0;
}

.hot {
  color: #f0502a;
}

/* vertical scroll bar */
.vScroll {
  width: 12px;
  display: flex;
  flex-direction: column;
  background: #7d9fcf;
  border-right: 1px solid #3c4a5e;
}

.vSplit {
  height: 7px;
  flex: none;
  background: #dfe9f6;
  border: 1px solid #a9c0da;
}

.vArrow {
  height: 12px;
  flex: none;
  display: flex;
  align-items: center;
  justify-content: center;
  background: #8dadd8;
}

.arrowUp,
.arrowDown {
  width: 0;
  height: 0;
  border-left: 3px solid transparent;
  border-right: 3px solid transparent;
}

.arrowUp { border-bottom: 3px solid #33527f; }
.arrowDown { border-top: 3px solid #33527f; }

.vThumb {
  height: 541px;
  flex: none;
  background: linear-gradient(90deg, #e6ebf2, #c3cedd);
  border: 1px solid #a8bbd4;
  border-radius: 2px;
}

.vTrack {
  flex: 1;
}

/* sheet tabs */
.sheetTabs {
  height: 12px;
  flex: none;
  display: flex;
  align-items: stretch;
  background: #8fb0d9;
  border-top: 1px solid #9db8d8;
  color: #3d6ba5;
}

.tabNav {
  width: 45px;
  flex: none;
  display: flex;
  align-items: center;
  justify-content: space-around;
  background: #dbe7f6;
  font-size: 6px;
  color: #34537d;
}

.sheetTab {
  flex: none;
  padding: 0 8px;
  background: #dbe7f6 linear-gradient(to bottom right, transparent 46%, #7f9ec4 50%, transparent 54%) right / 9px 100% no-repeat;
  line-height: 10px;
  white-space: nowrap;
  font-family: "Liberation Sans", sans-serif;
  font-size: 8.600px;
}

.tabWide { padding: 0 10.500px; }
.tabWider { padding: 0 13.500px; }

.sheetTabOn {
  background-color: #fff;
  color: #2d4a72;
  font-weight: bold;
}

.newSheet {
  width: 35px;
  display: flex;
  align-items: center;
  justify-content: center;
  padding: 0;
}

.hScroll {
  margin-left: auto;
  width: 101px;
  display: flex;
  align-items: center;
  background: #8dadd8;
  font-size: 6px;
  color: #34537d;
}

.hGrip {
  width: 4px;
  height: 11px;
  background: #fff;
  border: 1px solid #9db8d8;
}

.hArrow {
  width: 14px;
  text-align: center;
}

.hThumb {
  flex: 1;
  height: 11px;
  line-height: 10px;
  text-align: center;
  background: linear-gradient(#e8f0fa, #c6d9f0);
  border: 1px solid #aac2df;
}

.tabsEnd {
  width: 12px;
  background: #fff;
}

/* status bar */
.statusBar {
  height: 15px;
  flex: none;
  display: flex;
  align-items: center;
  background: linear-gradient(#c7dcf6, #e2edfb 45%, #b7cfee);
}

.ready {
  width: 34px;
  height: 15px;
  line-height: 14px;
  padding-left: 5px;
  color: #3a5a86;
  border-right: 1px solid #a9c2e0;
}

.statusRight {
  margin-left: auto;
  display: flex;
  align-items: center;
  height: 15px;
  padding-left: 5px;
  padding-right: 5px;
  background: #c5d8ef;
  border-left: 1px solid #a9c2e0;
}

.viewBtns {
  display: flex;
  width: 39px;
}

.viewBtn {
  flex: 1;
  height: 15px;
  display: flex;
  align-items: center;
  justify-content: center;
}

.viewOn {
  background: linear-gradient(#fde9b8, #fbcf7c);
}

.zoomPct {
  margin-left: 7px;
  width: 24px;
  color: #3a5a86;
}

.zoomBtn {
  width: 11px;
  height: 11px;
  border-radius: 50%;
  border: 1px solid #6f87a6;
  background: #eef3fa;
  color: #3a5a86;
  font-size: 10px;
  line-height: 8px;
  text-align: center;
  font-family: "Liberation Sans", sans-serif;
}

.zoomTrack {
  width: 74px;
  height: 1px;
  background: #5f7b9e;
  display: flex;
  justify-content: center;
  align-items: center;
}

.zoomThumb {
  width: 6px;
  height: 11px;
  background: #e8eff8;
  border: 1px solid #6f87a6;
}

/* bottom bar of the player */
.playerBar {
  flex: 1;
  display: flex;
  align-items: center;
  justify-content: space-between;
  padding: 0 6px 0 5px;
  background: #1c1f20;
}

.playerIcons {
  display: flex;
  gap: 10px;
}

.udemy {
  display: flex;
  align-items: center;
  gap: 2px;
  color: #85888a;
  font-family: "Open Sans", sans-serif;
  font-size: 10.500px;
}

/* floating picture of the code */
.codePanel {
  position: absolute;
  left: 793px;
  top: 160px;
  width: 537px;
  height: 268px;
  padding: 5px 7px;
  background: #1c1f21;
  font-family: "Liberation Sans", sans-serif;
  font-style: italic;
  font-size: 9.450px;
  color: #c8caca;
}

.codeLine {
  height: 21.500px;
  line-height: 21.500px;
  white-space: pre;
}

.lvl1 { padding-left: 21px; }
.lvl2 { padding-left: 51px; }
.green { color: #13813f; }
.dim { color: #0d6b36; }
.fnName { color: #d19a17; }

/* presentation toolbar */
.penBar {
  position: absolute;
  left: 26px;
  top: 265px;
  width: 47px;
  height: 338px;
  padding-top: 2px;
  display: grid;
  grid-auto-rows: 36.500px;
  justify-items: center;
  align-items: center;
  background: #5f5f5f;
  border: 3px solid #a5a7a5;
  border-radius: 7px;
}

.penActive {
  position: relative;
  width: 29px;
  height: 29px;
  display: flex;
  align-items: center;
  justify-content: center;
  border-radius: 50%;
  background: radial-gradient(circle at 40% 30%, #fff, #c9c9c9);
}

.penSlot {
  position: relative;
  width: 29px;
  height: 24px;
  display: flex;
  justify-content: center;
}

.penFlag {
  position: absolute;
  right: -3px;
  bottom: 0;
  width: 0;
  height: 0;
  border-top: 2px solid transparent;
  border-bottom: 2px solid transparent;
  border-left: 3px solid #111;
}

/* ink */
.cursorGlow {
  position: absolute;
  left: 635px;
  top: 207px;
  width: 50px;
  height: 50px;
  border-radius: 50%;
  background: radial-gradient(circle, rgba(255, 250, 170, 0.7) 0, rgba(255, 245, 120, 0.45) 50%, rgba(255, 240, 80, 0) 72%);
}

.inkLayer {
  position: absolute;
  left: 0;
  top: 0;
  pointer-events: none;
}

.ink path {
  fill: none;
  stroke: #f01c12;
  stroke-width: 5;
  stroke-linecap: round;
  stroke-linejoin: round;
}

.ink .thin { stroke-width: 4.500; }
.ink .thick { stroke-width: 6; }
.ink .inkOrange { stroke: #f2602a; }

.inkDigit {
  position: absolute;
  width: 14px;
  text-align: center;
  font-family: "Liberation Sans", sans-serif;
  font-weight: bold;
  font-size: 24px;
  line-height: 24px;
  color: #f01c12;
}

.d1 { left: 1012px; top: 124px; }
.d2 { left: 1058px; top: 141px; }
.d3 { left: 1033px; top: 276px; }
.d4 { left: 1064px; top: 272px; }
.d5 { left: 1032px; top: 333px; }
.d6 { left: 1065px; top: 333px; }
```
